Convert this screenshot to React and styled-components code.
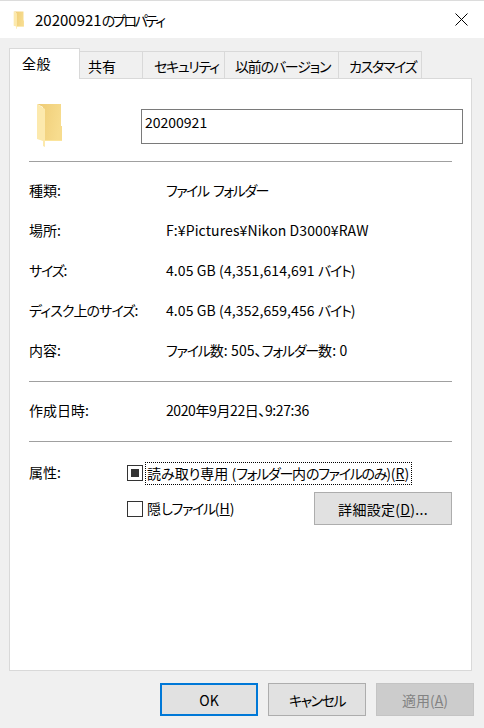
import React from 'react';
import styled, { createGlobalStyle } from 'styled-components';

const Global = createGlobalStyle`
  html, body {
    margin: 0;
    padding: 0;
    background: #f0f0f0;
  }
  * {
    box-sizing: border-box;
  }
`;

const Dialog = styled.div`
  width: 484px;
  height: 728px;
  display: flex;
  flex-direction: column;
  overflow: hidden;
  background: #f0f0f0;
  border-top: 1px solid #dcdcdc;
  color: #000;
  font-family: "Noto Sans CJK JP", "Liberation Sans", sans-serif;
  font-size: 14px;
  font-feature-settings: "palt";
`;

// the reference's UI font has much narrower kana than Noto
const Kana = styled.span`
  letter-spacing: ${p => p.$ls || -1.2}px;
  word-spacing: ${p => p.$ws || 0}px;
  font-size: ${p => (p.$size ? `${p.$size}px` : 'inherit')};
`;

const TitleBar = styled.div`
  height: 37px;
  flex: none;
  display: flex;
  align-items: center;
  padding: 0 16px 0 13px;
  background: #fff;
`;

const Title = styled.div`
  margin-left: 10px;
  font-size: 15px;
  flex: 1;
`;

const Close = styled.svg`
  width: 13px;
  height: 13px;
`;

const Body = styled.div`
  flex: 1;
  display: flex;
  flex-direction: column;
  padding: 13px 12px 0 9px;
`;

const TabRow = styled.div`
  display: flex;
  align-items: flex-end;
  height: 28px;
  margin-bottom: -1px;
  position: relative;
  z-index: 1;
`;

const Tab = styled.div`
  height: ${p => (p.$active ? '31px' : '28px')};
  width: ${p => p.$w}px;
  display: flex;
  align-items: center;
  padding-left: ${p => p.$pad}px;
  padding-top: ${p => (p.$active ? '0' : '1px')};
  padding-bottom: ${p => (p.$active ? '3px' : '0')};
  background: ${p => (p.$active ? '#fff' : '#f0f0f0')};
  border: 1px solid #d9d9d9;
  border-left-width: ${p => (p.$active ? '1px' : '0')};
  border-bottom: ${p => (p.$active ? 'none' : '1px solid #d9d9d9')};
  letter-spacing: ${p => (p.$active ? '0.6px' : `${p.$ls || 0}px`)};
  white-space: nowrap;
`;

const Panel = styled.div`
  height: 593px;
  background: #fff;
  border: 1px solid #d9d9d9;
  padding: 0 19px 0 19px;
`;

const NameRow = styled.div`
  height: 82px;
  display: flex;
  align-items: flex-start;
  padding: 24px 0 0 8px;
`;

const FolderIcon = styled.svg`
  width: 26px;
  height: 44px;
  flex: none;
`;

const NameBox = styled.div`
  flex: none;
  width: 322px;
  height: 35px;
  margin: 6px 0 0 78px;
  border: 1px solid #7a7a7a;
  padding: 2px 3px 0;
`;

const Divider = styled.div`
  height: 1px;
  background: #a0a0a0;
`;

const Section = styled.div`
  display: grid;
  grid-template-columns: 137px 1fr;
  grid-auto-rows: 40px;
  padding: 8px 0 11px;
`;

const Label = styled.div`
  display: flex;
  align-items: center;
  white-space: pre;
`;

const Value = styled.div`
  align-self: center;
  white-space: pre;
  letter-spacing: ${p => p.$ls || 0.1}px;
`;

const AttrSection = styled.div`
  display: grid;
  grid-template-columns: 98px 1fr;
  padding-top: 14px;
`;

const AttrLabel = styled.div`
  padding-top: 6px;
`;

const AttrList = styled.div`
  display: flex;
  flex-direction: column;
  gap: 2px;
`;

const AttrRow = styled.div`
  display: flex;
  align-items: center;
  height: ${p => p.$h}px;
`;

const CheckBox = styled.div`
  width: 16px;
  height: 16px;
  flex: none;
  border: 1px solid #333;
  background: #fff;
  display: flex;
  align-items: center;
  justify-content: center;
  &::after {
    content: '';
    display: ${p => (p.$mixed ? 'block' : 'none')};
    width: 8px;
    height: 8px;
    background: #333;
  }
`;

const CheckLabel = styled.div`
  margin-left: 3px;
  padding: 0 2px 0 1px;
  height: 21px;
  line-height: 21px;
  white-space: pre;
  outline: ${p => (p.$focus ? '1px dotted #000' : 'none')};
`;

const Btn = styled.div`
  width: ${p => p.$w}px;
  height: 33px;
  display: flex;
  align-items: center;
  justify-content: center;
  background: ${p => (p.$disabled ? '#cccccc' : '#e1e1e1')};
  color: ${p => (p.$disabled ? '#838383' : '#000')};
  border: ${p => (p.$default ? '2px solid #0078d7' : p.$disabled ? '1px solid #c4c4c4' : '1px solid #adadad')};
  white-space: pre;
`;

const AdvancedBtn = styled(Btn)`
  margin-left: auto;
  letter-spacing: 0.3px;
`;

const Footer = styled.div`
  display: flex;
  justify-content: flex-end;
  gap: 10px;
  padding-top: 12px;
  margin-right: -2px;
`;

const tabs = [
  { label: '共有', w: 63, pad: 8 },
  { label: 'セキュリティ', w: 82, pad: 11, ls: -1.3 },
  { label: '以前のバージョン', w: 114, pad: 10, ls: -1.2 },
  { label: 'カスタマイズ', w: 83, pad: 10, ls: -1.3 },
];

const Folder = ({ as: Svg = FolderIcon, id }) => (
  <Svg viewBox="0 0 26 44">
    <defs>
      <linearGradient id={id} x1="0" y1="0" x2="1" y2="0.3">
        <stop offset="0" stopColor="#eecb74" />
        <stop offset="1" stopColor="#f7dc8e" />
      </linearGradient>
    </defs>
    <path d="M0 1H24V23H25V38H6V4z" fill={`url(#${id})`} />
    <path d="M0 1L8 6V44L6 43V38L0 36z" fill="#fce9ad" />
    <path d="M8 37H25V38H8z" fill="#fbe49c" />
  </Svg>
);

const TitleFolder = styled(FolderIcon)`
  width: 12px;
  height: 18px;
`;

export default function App() {
  return (
    <Dialog>
      <Global />
      <TitleBar>
        <Folder as={TitleFolder} id="title-folder" />
        <Title>20200921<Kana $ls={-2.3} $size={14}>のプロパティ</Kana></Title>
        <Close viewBox="0 0 13 13">
          <path d="M0.5 0.5l12 12M12.5 0.5l-12 12" stroke="#000" strokeWidth="1" fill="none" />
        </Close>
      </TitleBar>
      <Body>
        <TabRow>
          <Tab $active $w={71} $pad={12}>全般</Tab>
          {tabs.map(t => (
            <Tab key={t.label} $w={t.w} $pad={t.pad} $ls={t.ls}>{t.label}</Tab>
          ))}
        </TabRow>
        <Panel>
          <NameRow>
            <Folder id="big-folder" />
            <NameBox>20200921</NameBox>
          </NameRow>
          <Divider />
          <Section>
            <Label>種類:</Label><Value><Kana $ls={-1.5} $ws={3}>ファイル フォルダー</Kana></Value>
            <Label>場所:</Label><Value>F:¥Pictures¥Nikon D3000¥RAW</Value>
            <Label><Kana>サイズ</Kana>:</Label><Value>4.05 GB (4,351,614,691 <Kana>バイト</Kana>)</Value>
            <Label><Kana $ls={-0.9}>ディスク上のサイズ</Kana>:</Label><Value>4.05 GB (4,352,659,456 <Kana>バイト</Kana>)</Value>
            <Label>内容:</Label><Value><Kana>ファイル</Kana>数: 505、<Kana>フォルダー</Kana>数: 0</Value>
          </Section>
          <Divider />
          <Section>
            <Label>作成日時:</Label><Value $ls={-0.4}>2020年9月22日、9:27:36</Value>
          </Section>
          <Divider />
          <AttrSection>
            <AttrLabel>属性:</AttrLabel>
            <AttrList>
              <AttrRow $h={34}>
                <CheckBox $mixed />
                <CheckLabel $focus>読み取り専用 (<Kana $ls={-1.3}>フォルダー</Kana>内<Kana $ls={-1.3}>のファイルのみ</Kana>)(<u>R</u>)</CheckLabel>
              </AttrRow>
              <AttrRow $h={33}>
                <CheckBox />
                <CheckLabel>隠<Kana $ls={-1.3}>しファイル</Kana>(<u>H</u>)</CheckLabel>
                <AdvancedBtn $w={138}>詳細設定(<u>D</u>)...</AdvancedBtn>
              </AttrRow>
            </AttrList>
          </AttrSection>
        </Panel>
        <Footer>
          <Btn $default $w={98}>OK</Btn>
          <Btn $w={98}><Kana $ls={-1.5}>キャンセル</Kana></Btn>
          <Btn $disabled $w={98}>適用(<u>A</u>)</Btn>
        </Footer>
      </Body>
    </Dialog>
  );
}
